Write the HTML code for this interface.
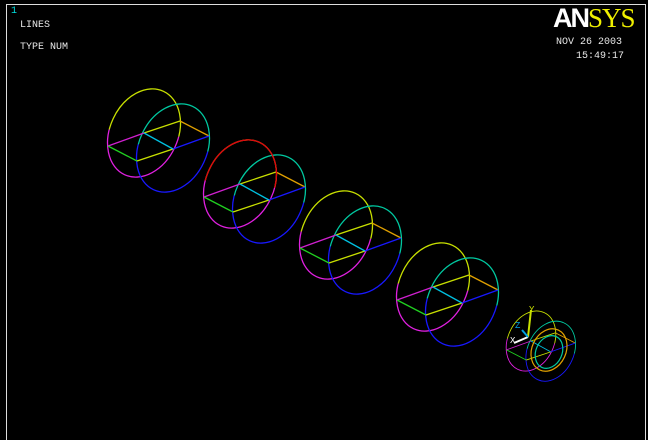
<!DOCTYPE html>
<html><head><meta charset="utf-8"><style>
html,body{margin:0;padding:0;background:#000;}
body{width:648px;height:440px;overflow:hidden;position:relative;font-family:"Liberation Mono",monospace;}
.t{position:absolute;color:#e8e8e8;font-size:10px;letter-spacing:0px;}
</style></head><body>
<svg width="648" height="440" style="position:absolute;left:0;top:0">
<defs>
<clipPath id="fu" clipPathUnits="userSpaceOnUse"><polygon points="0,183 300,79 300,0 0,0"/></clipPath>
<clipPath id="fd" clipPathUnits="userSpaceOnUse"><polygon points="0,183 300,79 300,300 0,300"/></clipPath>
<clipPath id="bu" clipPathUnits="userSpaceOnUse"><polygon points="0,208 300,104 300,0 0,0"/></clipPath>
<clipPath id="bd" clipPathUnits="userSpaceOnUse"><polygon points="0,208 300,104 300,300 0,300"/></clipPath>
<g id="u" fill="none" stroke-width="1.3">
<ellipse cx="144" cy="133" rx="34" ry="46" transform="rotate(25 144 133)" stroke="#c8e000" clip-path="url(#fu)"/>
<ellipse cx="144" cy="133" rx="34" ry="46" transform="rotate(25 144 133)" stroke="#e020e0" clip-path="url(#fd)"/>
<ellipse cx="173" cy="148" rx="34" ry="46" transform="rotate(25 173 148)" stroke="#00c8a0" clip-path="url(#bu)"/>
<ellipse cx="173" cy="148" rx="34" ry="46" transform="rotate(25 173 148)" stroke="#1818ff" clip-path="url(#bd)"/>
<line x1="108" y1="146" x2="144" y2="133" stroke="#d020d0"/>
<line x1="144" y1="133" x2="180" y2="121" stroke="#c8e000"/>
<line x1="180" y1="121" x2="209" y2="136" stroke="#e0a000"/>
<line x1="209" y1="136" x2="173" y2="149" stroke="#1818ff"/>
<line x1="173" y1="149" x2="137" y2="161" stroke="#c8e000"/>
<line x1="137" y1="161" x2="108" y2="146" stroke="#20d020"/>
<line x1="144" y1="133" x2="173" y2="149" stroke="#00c0e0"/>
</g>
</defs>
<line x1="6.5" y1="4.5" x2="6.5" y2="440" stroke="#ddd"/>
<line x1="6" y1="4.5" x2="646" y2="4.5" stroke="#ddd"/>
<line x1="645.5" y1="4.5" x2="645.5" y2="440" stroke="#ddd"/>
<use href="#u"/>
<g transform="translate(96,51)"><use href="#u"/>
<ellipse cx="144" cy="133" rx="34" ry="46" transform="rotate(25 144 133)" stroke="#e00010" fill="none" stroke-width="1.3" clip-path="url(#fu)"/></g>
<g transform="translate(192,102)"><use href="#u"/></g>
<g transform="translate(289,154)"><use href="#u"/></g>
<g transform="translate(531,341) scale(0.68) translate(-144,-133)"><use href="#u"/></g>
<g fill="none" stroke-width="1.2">
<ellipse cx="549" cy="350" rx="17" ry="22" transform="rotate(25 549 350)" stroke="#e0a000"/>
<ellipse cx="549" cy="352" rx="13" ry="17" transform="rotate(25 549 352)" stroke="#00c8a0"/>
<line x1="528" y1="337" x2="531" y2="310" stroke="#c8e000" stroke-width="2"/>
<line x1="528" y1="337" x2="514" y2="343" stroke="#fff" stroke-width="2"/>
<line x1="528" y1="337" x2="522" y2="330" stroke="#00a0e0" stroke-width="2"/>
</g>
<text x="529" y="312" fill="#c8e000" font-size="9" font-family="Liberation Mono">Y</text>
<text x="515" y="328" fill="#00a0e0" font-size="9" font-family="Liberation Mono">Z</text>
<text x="510" y="343" fill="#fff" font-size="9" font-family="Liberation Mono">X</text>
</svg>
<div class="t" style="left:11px;top:6px;color:#00e0e0;font-size:10px">1</div>
<div class="t" style="left:20px;top:20px">LINES</div>
<div class="t" style="left:20px;top:42px">TYPE NUM</div>
<div style="position:absolute;left:553px;top:3px;font-family:'Liberation Sans',sans-serif;font-weight:bold;font-size:27px;color:#fff;letter-spacing:-2px;line-height:30px">AN<span style="color:#f0f000;font-family:'Liberation Serif',serif;font-weight:normal;letter-spacing:-1px">SYS</span></div>
<div class="t" style="left:556px;top:37px">NOV 26 2003</div>
<div class="t" style="left:576px;top:51px">15:49:17</div>
</body></html>
